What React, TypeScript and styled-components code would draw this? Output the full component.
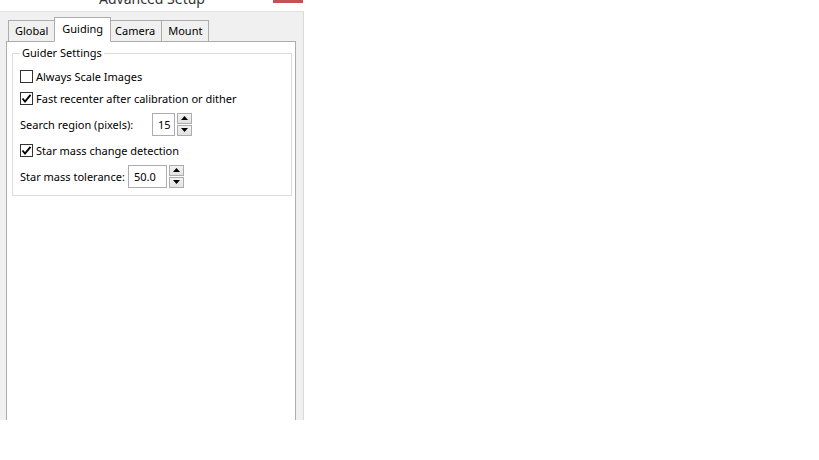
import React from "react";
import styled, { createGlobalStyle } from "styled-components";

const Global = createGlobalStyle`
  html, body { margin: 0; padding: 0; background: #ffffff; }
  body { width: 819px; height: 460px; overflow: hidden; font-family: "Noto Sans", "Segoe UI", sans-serif; font-size: 11px; color: #000; }
`;

const Window = styled.div`
  width: 304px;
  display: flex;
  flex-direction: column;
`;

const TitleBar = styled.div`
  height: 11px;
  overflow: hidden;
  display: grid;
  grid-template-columns: 30px 1fr 30px;
  background: #ffffff;
`;

const TitleText = styled.div`
  grid-column: 2;
  text-align: center;
  font-size: 14px;
  line-height: 15px;
  margin-top: -9px;
  color: #333;
`;

const CloseBtn = styled.div`
  grid-column: 3;
  height: 3px;
  margin-left: -1px;
  margin-right: 1px;
  background: #c75050;
`;

const Body = styled.div`
  height: 409px;
  overflow: hidden;
  background: #f0f0f0;
  border-right: 1px solid #d9d9d9;
  border-top: 1px solid #e2e2e2;
  box-sizing: border-box;
  padding: 5px 7px 0 6px;
  display: flex;
  flex-direction: column;
`;

const TabRow = styled.div`
  display: flex;
  align-items: flex-end;
  padding-left: 2px;
  position: relative;
  z-index: 1;
  margin-bottom: -1px;
`;

const Tab = styled.div<{ $active?: boolean; $first?: boolean }>`
  box-sizing: border-box;
  height: ${(p) => (p.$active ? "25px" : "22px")};
  padding: ${(p) => (p.$active ? "2px 7px 0" : p.$first ? "1px 7px 0 6px" : "1px 6px 0")};
  margin-left: ${(p) => (p.$active ? "-2px" : p.$first ? "0" : "-1px")};
  margin-right: ${(p) => (p.$active ? "-2px" : "0")};
  position: relative;
  z-index: ${(p) => (p.$active ? 2 : 1)};
  background: ${(p) => (p.$active ? "#ffffff" : "#f0f0f0")};
  border: 1px solid #acacac;
  border-bottom: 1px solid ${(p) => (p.$active ? "#ffffff" : "#acacac")};
  line-height: 18px;
  white-space: nowrap;
`;

const Panel = styled.div`
  flex: 1;
  background: #ffffff;
  border: 1px solid #adadad;
  border-bottom: none;
  padding: 4px 3px 0 5px;
`;

const Group = styled.fieldset`
  margin: 0;
  border: 1px solid #dcdcdc;
  padding: 5px 0 4px 7px;
  display: flex;
  flex-direction: column;
`;

const Legend = styled.legend`
  padding: 0 2px;
  line-height: 14px;
`;

const CheckRow = styled.div`
  display: flex;
  align-items: center;
  height: 22px;
  gap: 3px;
`;

const Box = styled.span`
  width: 13px;
  height: 13px;
  box-sizing: border-box;
  border: 1px solid #333333;
  background: #ffffff;
  display: inline-flex;
  align-items: center;
  justify-content: center;
`;

const FieldRow = styled.div`
  display: flex;
  align-items: center;
  height: 30px;
`;

const Label = styled.span<{ $w: number }>`
  white-space: nowrap;
  width: ${(p) => p.$w}px;
  flex: none;
`;

const Input = styled.div<{ $w: number }>`
  box-sizing: border-box;
  width: ${(p) => p.$w}px;
  height: 23px;
  border: 1px solid #abadb3;
  background: #fff;
  padding-left: 5px;
  line-height: 21px;
`;

const Spin = styled.div`
  display: flex;
  flex-direction: column;
  gap: 1px;
  margin-left: 2px;
`;

const SpinBtn = styled.div`
  box-sizing: border-box;
  width: 15px;
  height: 11px;
  border: 1px solid #acacac;
  background: linear-gradient(#f2f2f2, #e2e2e2);
  display: flex;
  align-items: center;
  justify-content: center;
`;

const Check = () => (
  <svg width="11" height="11" viewBox="0 0 11 11">
    <path d="M1.5 5.5 L4 8.5 L9.5 1.8" fill="none" stroke="#000" strokeWidth="1.9" />
  </svg>
);

const Up = () => (
  <svg width="7" height="4" viewBox="0 0 7 4"><path d="M0 4 L3.5 0 L7 4 Z" fill="#000" /></svg>
);
const Down = () => (
  <svg width="7" height="4" viewBox="0 0 7 4"><path d="M0 0 L3.5 4 L7 0 Z" fill="#000" /></svg>
);

const CheckBox: React.FC<{ checked?: boolean; label: string }> = ({ checked, label }) => (
  <CheckRow>
    <Box>{checked && <Check />}</Box>
    <span>{label}</span>
  </CheckRow>
);

const SpinField: React.FC<{ label: string; value: string; w: number; labelW: number }> = ({ label, value, w, labelW }) => (
  <FieldRow>
    <Label $w={labelW}>{label}</Label>
    <Input $w={w}>{value}</Input>
    <Spin>
      <SpinBtn><Up /></SpinBtn>
      <SpinBtn><Down /></SpinBtn>
    </Spin>
  </FieldRow>
);

export default function App() {
  return (
    <>
      <Global />
      <Window>
        <TitleBar>
          <TitleText>Advanced Setup</TitleText>
          <CloseBtn />
        </TitleBar>
        <Body>
          <TabRow>
            <Tab $first>Global</Tab>
            <Tab $active>Guiding</Tab>
            <Tab>Camera</Tab>
            <Tab>Mount</Tab>
          </TabRow>
          <Panel>
            <Group>
              <Legend>Guider Settings</Legend>
              <CheckBox label="Always Scale Images" />
              <CheckBox checked label="Fast recenter after calibration or dither" />
              <SpinField label="Search region (pixels):" value="15" w={23} labelW={132} />
              <CheckBox checked label="Star mass change detection" />
              <SpinField label="Star mass tolerance:" value="50.0" w={39} labelW={108} />
            </Group>
          </Panel>
        </Body>
      </Window>
    </>
  );
}
